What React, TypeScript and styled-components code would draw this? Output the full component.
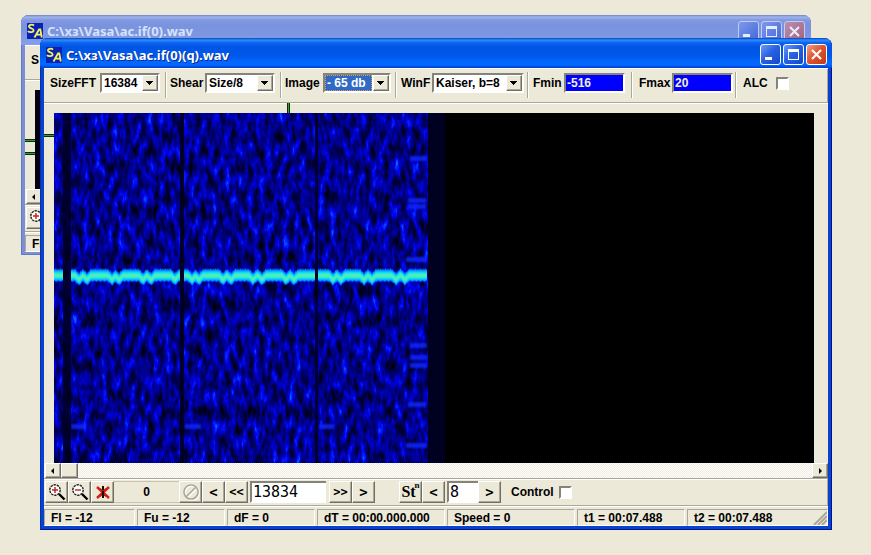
import React from "react";
import styled, { createGlobalStyle, css } from "styled-components";

const GlobalStyle = createGlobalStyle`
  * { box-sizing: border-box; }
  html, body, #root { height: 100%; }
  body {
    margin: 0;
    background: #ece9d8;
    color: #000;
    font: bold 12px/16px "Liberation Sans", sans-serif;
    overflow: hidden;
  }
`;

const face = "#ece9d8";

const raised = css`
  border: 1px solid;
  border-color: #fff #716f64 #716f64 #fff;
  box-shadow: inset -1px -1px 0 #aca899;
`;

const sunken = css`
  border: 2px solid;
  border-color: #86847a #fff #fff #86847a;
`;

const Desktop = styled.main`
  position: relative;
  min-height: 100%;
  overflow: hidden;
`;

const Frame = styled.section<{ $active?: boolean }>`
  position: absolute;
  display: flex;
  flex-direction: column;
  left: ${(p) => (p.$active ? 40 : 21)}px;
  right: ${(p) => (p.$active ? 39 : 60)}px;
  top: ${(p) => (p.$active ? 38 : 15)}px;
  padding: 0 4px ${(p) => (p.$active ? 4 : 3)}px;
  border-radius: 8px 8px 0 0;
  background: ${(p) => (p.$active ? "#0a42d0" : "#7a8fd8")};
  box-shadow: inset 1px 0 0 ${(p) => (p.$active ? "#0831a8" : "#6678c0")},
    inset -1px -1px 0 ${(p) => (p.$active ? "#00138c" : "#6678c0")};
`;

const TitleBar = styled.header<{ $active?: boolean }>`
  display: flex;
  align-items: center;
  gap: 4px;
  height: 30px;
  margin: 0 -4px;
  padding: ${(p) => (p.$active ? "3px 5px 0 6px" : "2px 6px 0 6px")};
  border-radius: 8px 8px 0 0;
  background: ${(p) =>
    p.$active
      ? "linear-gradient(#0842b0 0, #2f8cff 2px, #0a62ee 5px, #0055e5 9px, #0058ea 18px, #0468ff 24px, #0468ff 27px, #003bd0 30px)"
      : "linear-gradient(#6e80c4 0, #a0b4ec 2px, #8299e0 5px, #7a93df 10px, #7c96e2 20px, #86a0ec 30px)"};
`;

const TitleText = styled.h1<{ $active?: boolean }>`
  flex: 1;
  margin: 0;
  color: ${(p) => (p.$active ? "#fff" : "#d8e2fa")};
  font: bold 13px/18px "Noto Sans", sans-serif;
  text-shadow: ${(p) => (p.$active ? "1px 1px 0 #0a2a8a" : "none")};
  white-space: nowrap;
`;

const Caption = styled.button<{ $close?: boolean; $dim?: boolean }>`
  width: 21px;
  height: 21px;
  margin-left: -2px;
  padding: 0;
  border: 1px solid ${(p) => (p.$dim ? "#c0ccf2" : "#fff")};
  border-radius: 3px;
  color: ${(p) => (p.$dim ? "#e6ecfc" : "#fff")};
  background: ${(p) =>
    p.$close
      ? p.$dim
        ? "linear-gradient(135deg, #b890b0, #a8607c)"
        : "linear-gradient(135deg, #f0a088, #e0562e 45%, #c03a12)"
      : p.$dim
        ? "linear-gradient(135deg, #7c98ee, #4468d8)"
        : "linear-gradient(135deg, #6c9cf8, #2a62e4 45%, #1446c8)"};
  svg { display: block; }
`;

const Client = styled.div`
  background: ${face};
  border-top: 1px solid #fff;
`;

const Toolbar = styled.div`
  display: flex;
  height: 34px;
  padding: 3px 0 4px;
  border-bottom: 1px solid #aca899;
  border-right: 1px solid #aca899;
  box-shadow: 0 1px 0 #fff;
`;

const Field = styled.label<{ $w?: number; $left: number; $right: number }>`
  display: flex;
  align-items: center;
  justify-content: space-between;
  width: ${(p) => (p.$w ? p.$w + "px" : "auto")};
  gap: ${(p) => (p.$w ? 0 : 8)}px;
  padding: 1px ${(p) => p.$right}px 5px ${(p) => p.$left}px;
  border-right: ${(p) => (p.$w ? "1px solid #aca899" : "0")};
  box-shadow: ${(p) => (p.$w ? "1px 0 0 #fff" : "none")};
  line-height: 20px;
  white-space: nowrap;
`;

const Combo = styled.span<{ $w: number }>`
  ${sunken}
  position: relative;
  width: ${(p) => p.$w}px;
  height: 20px;
  background: #fff;
`;

const ComboSelect = styled.select<{ $on?: boolean }>`
  appearance: none;
  display: block;
  width: calc(100% - 17px);
  height: 16px;
  padding: 0 0 0 2px;
  border: 0;
  outline: ${(p) => (p.$on ? "1px dotted #d8a050" : "0")};
  outline-offset: -1px;
  border-radius: 0;
  background: ${(p) => (p.$on ? "#316ac5" : "#fff")};
  color: ${(p) => (p.$on ? "#fff" : "#000")};
  font: inherit;
  line-height: 16px;
  overflow: hidden;
`;

const Drop = styled.span`
  ${raised}
  position: absolute;
  top: 0;
  right: 0;
  width: 16px;
  height: 16px;
  background: ${face};
  pointer-events: none;
  svg { display: block; }
`;

const BlueInput = styled.input`
  ${sunken}
  width: 61px;
  height: 20px;
  padding: 0 1px 1px;
  background: #00f;
  color: #f4efd0;
  font: inherit;
`;

const Check = styled.input`
  ${sunken}
  appearance: none;
  width: 13px;
  height: 13px;
  margin: 0;
  align-self: center;
  background: #fff;
`;

const View = styled.div`
  display: grid;
  grid-template: 10px 350px / 10px 1fr 14px;
`;

const TopRule = styled.div`
  grid-column: 1 / -1;
  padding-left: 243px;
`;

const Mark = styled.div<{ $tall?: boolean }>`
  width: ${(p) => (p.$tall ? "3px" : "100%")};
  height: ${(p) => (p.$tall ? "10px" : "3px")};
  background: #28a828;
  border: solid #102810;
  border-width: ${(p) => (p.$tall ? "0 1px" : "1px 0")};
`;

const SideRule = styled.div`
  padding-top: 21px;
`;

const Plot = styled.div`
  background: #000;
  overflow: hidden;
  svg { display: block; }
`;

const ScrollBar = styled.div`
  display: flex;
  height: 15px;
  padding-left: 1px;
  background: conic-gradient(#fff 25%, #efebdf 0 50%, #fff 0 75%, #efebdf 0) 0 0 / 2px 2px;
`;

const ScrollButton = styled.button<{ $push?: boolean; $w?: number }>`
  ${raised}
  display: grid;
  place-items: center;
  width: ${(p) => p.$w ?? 16}px;
  height: 15px;
  margin-left: ${(p) => (p.$push ? "auto" : "0")};
  padding: 0;
  background: ${face};
`;

const Controls = styled.div`
  display: flex;
  align-items: center;
  height: 28px;
  padding-left: 1px;
  border: solid #aca899;
  border-width: 1px 1px 1px 0;
  box-shadow: inset 0 1px 0 #fff, 0 1px 0 #fff;
`;

const Tool = styled.button`
  ${raised}
  display: grid;
  place-items: center;
  flex: none;
  width: 23px;
  height: 22px;
  padding: 0;
  background: ${face};
  color: #000;
  font: bold 14px/18px "DejaVu Sans Mono", monospace;
  svg { display: block; }
`;

const Pair = styled.span`
  font: bold 12px/18px "DejaVu Sans Mono", monospace;
`;

const StepMark = styled.span`
  position: relative;
  padding-right: 4px;
  font: bold 16px/18px "Liberation Serif", serif;
  sup {
    position: absolute;
    top: -4px;
    right: 0;
    font: bold 9px/12px "Liberation Serif", serif;
  }
`;

const Counter = styled.output`
  flex: none;
  width: 65px;
  height: 22px;
  border: solid #c8c4b2;
  border-width: 1px 0;
  line-height: 20px;
  text-align: center;
`;

const NumberBox = styled.input<{ $w: number; $after?: number }>`
  ${sunken}
  border-right-width: 0;
  flex: none;
  width: ${(p) => p.$w}px;
  height: 22px;
  margin: 0 ${(p) => p.$after ?? 0}px 0 2px;
  padding: 0 1px;
  font: 15px/18px "DejaVu Sans Mono", monospace;
  background: #fff;
`;

const Space = styled.span`
  width: 24px;
`;

const ControlLabel = styled.label`
  display: flex;
  gap: 5px;
  padding-left: 10px;
`;

const Status = styled.footer`
  display: grid;
  grid-template-columns: 91px 88px 88px 128px 128px 108px 1fr;
  gap: 2px;
  padding-top: 3px;
`;

const Cell = styled.div`
  display: flex;
  justify-content: space-between;
  height: 17px;
  padding-left: 6px;
  border: 1px solid;
  border-color: #aca899 #fff #fff #aca899;
  line-height: 16px;
  white-space: nowrap;
`;

const BackPlot = styled.div`
  display: grid;
  grid-template-columns: 10px 1fr 14px;
  height: 109px;
  padding-top: 10px;
`;

const BackRule = styled.div`
  display: grid;
  align-content: start;
  gap: 10px;
  padding-top: 49px;
`;

const BackCanvas = styled.div`
  background: #000010;
`;

function Logo() {
  return (
    <svg width="16" height="16" viewBox="0 0 16 16">
      <path fill="#0a22b0" d="M0 0h16v16H0z" />
      <path
        d="M7 2.6C5.5 1 1.5 1.6 2 3.8c.4 1.8 4.6 1.2 4.6 3.4C6.6 9.6 2.2 9.8 1 8M7.5 14.5 12 6.5h1.3l1.5 8M9.2 11.7h5"
        fill="none"
        stroke="#f4f060"
        strokeWidth="1.8"
      />
    </svg>
  );
}

function Captions({ dim }: { dim?: boolean }) {
  return (
    <>
      <Caption $dim={dim} aria-label="Minimize">
        <svg width="19" height="19"><path d="M4 12h7v3H4z" fill="currentColor" /></svg>
      </Caption>
      <Caption $dim={dim} aria-label="Maximize">
        <svg width="19" height="19">
          <path d="M4 4h11v11H4zM5 7v7h9V7z" fill="currentColor" fillRule="evenodd" />
        </svg>
      </Caption>
      <Caption $dim={dim} $close aria-label="Close">
        <svg width="19" height="19">
          <path d="m5 5 9 9m0-9-9 9" stroke="currentColor" strokeWidth="2.2" />
        </svg>
      </Caption>
    </>
  );
}

function Choice({ label, value, w, fieldW, left, right, on }: {
  label: string; value: string; w: number; fieldW: number; left: number; right: number; on?: boolean;
}) {
  return (
    <Field $w={fieldW} $left={left} $right={right}>
      {label}
      <Combo $w={w}>
        <ComboSelect $on={on} defaultValue={value}>
          <option>{value}</option>
        </ComboSelect>
        <Drop>
          <svg width="14" height="14"><path d="M3 5h7v1H9v1H8v1H7v1H6V8H5V7H4V6H3z" /></svg>
        </Drop>
      </Combo>
    </Field>
  );
}

function Magnifier({ plus }: { plus?: boolean }) {
  return (
    <svg width="18" height="18" viewBox="0 0 18 18">
      <circle cx="7" cy="7" r="5.2" fill="#fff" stroke="#222" strokeWidth="1.4" strokeDasharray="2.4 .8" />
      <path d="m11 11 5.5 5.5" stroke="#000" strokeWidth="2.4" />
      <path d={plus ? "M4 7h6M7 4v6" : "M4 7h6"} stroke="#c82010" strokeWidth="1.4" />
    </svg>
  );
}

function Arrow({ right }: { right?: boolean }) {
  return (
    <svg width="8" height="8">
      <path d={right ? "M3 1v6l3-3z" : "M5 1v6L2 4z"} />
    </svg>
  );
}

type Segment = { from: number; to: number; dips: number[] };

const SEGMENTS: Segment[] = [
  { from: 0, to: 9, dips: [] },
  { from: 17, to: 126, dips: [25, 33, 58, 65, 89, 97, 121] },
  { from: 130, to: 261, dips: [138, 145, 169, 177, 199, 208, 232, 240] },
  { from: 264, to: 373, dips: [279, 287, 310, 318, 342, 351] },
];

function carrierBand(s: Segment, half: number, ragged = 0) {
  const top: string[] = [];
  const bottom: string[] = [];
  for (let x = s.from; x <= s.to; x++) {
    const near = Math.min(9, ...s.dips.map((d) => Math.abs(d - x)));
    const dip = near < 4 ? 4 - near : 0;
    const up = ragged * ((x * 7 + x * x) % 5) * 0.4;
    const down = ragged * ((x * 3 + x * x) % 4) * 0.4;
    top.push(x + " " + (162.5 + dip - half - up));
    bottom.unshift(x + " " + (162.5 + dip + half + down));
  }
  return "M" + top.join("L") + "L" + bottom.join("L") + "z";
}

const STREAKS = [
  [354, 86, 18], [354, 92, 18], [356, 44, 17], [352, 145, 21], [356, 231, 17], [356, 243, 17], [356, 251, 17],
  [354, 290, 18], [352, 331, 21], [17, 312, 15], [131, 312, 16], [265, 312, 15],
];

function Spectrogram() {
  return (
    <svg width="391" height="350" viewBox="0 0 391 350" role="img" aria-label="Spectrogram">
      <defs>
        <filter id="noise" x="0" y="0" width="100%" height="100%" colorInterpolationFilters="sRGB">
          <feTurbulence type="fractalNoise" baseFrequency="0.17 0.065" numOctaves="3" seed="7" />
          <feColorMatrix values="1.3 0 0 0 -0.15  1.3 0 0 0 -0.15  1.3 0 0 0 -0.15  0 0 0 0 1" />
          <feComponentTransfer>
            <feFuncR type="table" tableValues="0 0" />
            <feFuncG type="table" tableValues="0 0 0 0 0 0 .02 .15 .4" />
            <feFuncB type="table" tableValues="0 .1 .22 .36 .54 .72 .92 1 1" />
          </feComponentTransfer>
        </filter>
        <filter id="soft" x="-20%" y="-100%" width="140%" height="300%">
          <feGaussianBlur stdDeviation="1" />
        </filter>
      </defs>
      <rect width="374" height="350" filter="url(#noise)" />
      <rect x="374" width="17" height="350" fill="#000020" />
      {STREAKS.map(([x, y, w]) => (
        <rect key={x + "-" + y} x={x} y={y - 1} width={w} height="5" fill="#0828ff" opacity=".85" filter="url(#soft)" />
      ))}
      <g fill="#00001c">
        <rect x="9" width="8" height="350" opacity=".85" />
        <rect x="126" width="4" height="350" opacity=".9" />
        <rect x="261" width="3" height="350" opacity=".8" />
      </g>
      {SEGMENTS.map((s) => (
        <g key={s.from}>
          <path d={carrierBand(s, 6, 1)} fill="#0040ff" opacity=".8" />
          <path d={carrierBand(s, 5, 1)} fill="#0098ff" />
          <path d={carrierBand(s, 4)} fill="#10d8f8" />
          <path d={carrierBand(s, 2)} fill="#48f0b8" />
        </g>
      ))}
    </svg>
  );
}

const STATUS = ["Fl = -12", "Fu = -12", "dF = 0", "dT  = 00:00.000.000", "Speed = 0", "t1 = 00:07.488", "t2 = 00:07.488"];

export default function App() {
  return (
    <Desktop>
      <GlobalStyle />
      <Frame>
        <TitleBar>
          <Logo />
          <TitleText>C:\хз\Vasa\ac.if(0).wav</TitleText>
          <Captions dim />
        </TitleBar>
        <Client>
          <Toolbar><Field $w={122} $left={6} $right={6}>S</Field></Toolbar>
          <BackPlot>
            <BackRule><Mark /><Mark /></BackRule>
            <BackCanvas />
          </BackPlot>
          <ScrollBar><ScrollButton aria-label="Scroll left"><Arrow /></ScrollButton></ScrollBar>
          <Controls><Tool aria-label="Zoom in"><Magnifier plus /></Tool></Controls>
          <Status><Cell>Fl</Cell></Status>
        </Client>
      </Frame>

      <Frame $active>
        <TitleBar $active>
          <Logo />
          <TitleText $active>C:\хз\Vasa\ac.if(0)(q).wav</TitleText>
          <Captions />
        </TitleBar>
        <Client>
          <Toolbar>
            <Choice label="SizeFFT" value="16384" w={60} fieldW={122} left={6} right={5} />
            <Choice label="Shear" value="Size/8" w={70} fieldW={115} left={4} right={5} />
            <Choice label="Image" value="- 65 db" w={68} fieldW={115} left={4} right={4} on />
            <Choice label="WinF" value="Kaiser, b=8" w={92} fieldW={132} left={5} right={3} />
            <Field $w={104} $left={5} $right={6}>Fmin<BlueInput defaultValue="-516" /></Field>
            <Field $w={104} $left={7} $right={2}>Fmax<BlueInput defaultValue="20" /></Field>
            <Field $left={7} $right={0}>ALC<Check type="checkbox" /></Field>
          </Toolbar>
          <View>
            <TopRule><Mark $tall /></TopRule>
            <SideRule><Mark /></SideRule>
            <Plot><Spectrogram /></Plot>
          </View>
          <ScrollBar>
            <ScrollButton aria-label="Scroll left"><Arrow /></ScrollButton>
            <ScrollButton $w={17} aria-label="Scroll position" />
            <ScrollButton $push aria-label="Scroll right"><Arrow right /></ScrollButton>
          </ScrollBar>
          <Controls>
            <Tool aria-label="Zoom in"><Magnifier plus /></Tool>
            <Tool aria-label="Zoom out"><Magnifier /></Tool>
            <Tool aria-label="Clear">
              <svg width="16" height="16">
                <path d="M8 2v12M5 5l6 7m0-7-6 7" stroke="#301010" strokeWidth="2" />
                <path d="m2 3 12 11M14 3 2 14" stroke="#d02010" strokeWidth="2.4" />
                <path d="M8 2v3m0 2v4m0 1v2" stroke="#200808" strokeWidth="2" />
              </svg>
            </Tool>
            <Counter>0</Counter>
            <Tool disabled aria-label="Stop">
              <svg width="18" height="18" fill="none" strokeWidth="1.6">
                <path d="M10 3a7 7 0 1 0 .1 0M5 15 15 5" stroke="#fff" />
                <path d="M9 2a7 7 0 1 0 .1 0M4 14 14 4" stroke="#aca899" />
              </svg>
            </Tool>
            <Tool>&lt;</Tool>
            <Tool><Pair>&lt;&lt;</Pair></Tool>
            <NumberBox $w={76} $after={3} defaultValue="13834" aria-label="Position" />
            <Tool><Pair>&gt;&gt;</Pair></Tool>
            <Tool>&gt;</Tool>
            <Space />
            <Tool><StepMark>St<sup>n</sup></StepMark></Tool>
            <Tool>&lt;</Tool>
            <NumberBox $w={31} defaultValue="8" aria-label="Step" />
            <Tool>&gt;</Tool>
            <ControlLabel>Control<Check type="checkbox" /></ControlLabel>
          </Controls>
          <Status>
            {STATUS.map((text, i) => (
              <Cell key={text + i}>
                {text}
                {i === 6 && (
                  <svg width="14" height="15">
                    <path d="M1 15 14 2M5 15l9-9M9 15l5-5" stroke="#aca899" strokeWidth="2" />
                  </svg>
                )}
              </Cell>
            ))}
          </Status>
        </Client>
      </Frame>
    </Desktop>
  );
}
